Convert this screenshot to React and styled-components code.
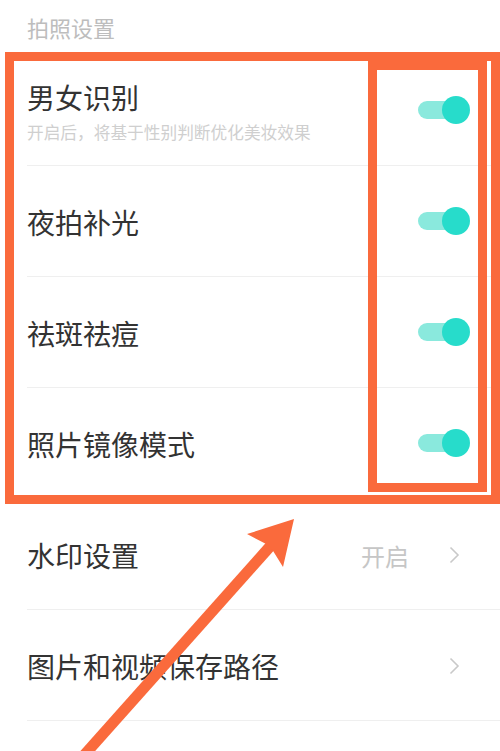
import React from 'react'
import styled, { createGlobalStyle } from 'styled-components'

const GlobalStyle = createGlobalStyle`
  html, body {
    margin: 0;
    padding: 0;
    background: #fff;
  }
  body {
    font-family: "Noto Sans CJK SC", "Noto Sans", sans-serif;
  }
`

const switches = [
  { title: '男女识别', desc: '开启后，将基于性别判断优化美妆效果' },
  { title: '夜拍补光' },
  { title: '祛斑祛痘' },
  { title: '照片镜像模式' },
]

const links = [
  { title: '水印设置', value: '开启' },
  { title: '图片和视频保存路径' },
  { title: '' },
]

const App = () => {
  return (
    <Page>
      <GlobalStyle />
      <SectionTitle>拍照设置</SectionTitle>
      <List>
        {switches.map((s) => (
          <Row key={s.title}>
            <Texts>
              <Title>{s.title}</Title>
              {s.desc && <Desc>{s.desc}</Desc>}
            </Texts>
            <Toggle>
              <Thumb />
            </Toggle>
          </Row>
        ))}
        {links.map((l, i) => (
          <Row key={i}>
            <Texts>
              <Title>{l.title}</Title>
            </Texts>
            {l.title && (
              <Trail>
                {l.value && <Value>{l.value}</Value>}
                <Chevron viewBox="0 0 11 18">
                  <polyline points="1.5,1.5 9,9 1.5,16.5" />
                </Chevron>
              </Trail>
            )}
          </Row>
        ))}
      </List>

      <Highlight $top={52} $left={5} $width={495} $height={452} />
      <Highlight $top={61} $left={368} $width={119} $height={431} />
      <Arrow viewBox="0 0 500 751">
        <line x1="78" y1="762" x2="274" y2="542" />
        <polygon points="294,519 247,534 270,546 283,567" />
      </Arrow>
    </Page>
  )
}

export default App

const Page = styled.div`
  position: relative;
  width: 500px;
  height: 751px;
  overflow: hidden;
  background: #fff;
`

const SectionTitle = styled.div`
  height: 55px;
  padding-left: 27px;
  display: flex;
  align-items: center;
  padding-bottom: 2px;
  box-sizing: border-box;
  font-size: 22px;
  color: #bdbdbd;
`

const List = styled.div`
  display: flex;
  flex-direction: column;
  padding-left: 27px;
`

const Row = styled.div`
  height: 111px;
  box-sizing: border-box;
  display: flex;
  align-items: center;
  justify-content: space-between;
  padding-right: 30px;
  padding-top: 2px;
  border-bottom: 1px solid #efefef;
`

const Texts = styled.div`
  display: flex;
  flex-direction: column;
  gap: 6px;
`

const Title = styled.div`
  font-size: 28px;
  line-height: 36px;
  color: #333;
`

const Desc = styled.div`
  font-size: 16.7px;
  line-height: 22px;
  color: #cfcfcf;
`

const Toggle = styled.div`
  position: relative;
  width: 52px;
  height: 28px;
  margin-top: -2px;
  display: flex;
  align-items: center;
  justify-content: flex-end;

  &::before {
    content: '';
    position: absolute;
    left: 0;
    right: 8px;
    top: 5px;
    height: 18px;
    border-radius: 9px;
    background: #8ae9dd;
  }
`

const Thumb = styled.div`
  position: relative;
  width: 28px;
  height: 28px;
  border-radius: 50%;
  background: #27dccb;
`

const Trail = styled.div`
  display: flex;
  align-items: center;
  gap: 40px;
  padding-right: 10px;
`

const Value = styled.span`
  font-size: 24px;
  color: #c6c6c6;
`

const Chevron = styled.svg`
  width: 11px;
  height: 18px;
  fill: none;
  stroke: #c9c9c9;
  stroke-width: 1.6;
`

const Highlight = styled.div`
  position: absolute;
  top: ${(p) => p.$top}px;
  left: ${(p) => p.$left}px;
  width: ${(p) => p.$width}px;
  height: ${(p) => p.$height}px;
  box-sizing: border-box;
  border: 9px solid #fa6a3c;
  pointer-events: none;
`

const Arrow = styled.svg`
  position: absolute;
  inset: 0;
  width: 500px;
  height: 751px;
  pointer-events: none;

  line {
    stroke: #fa6a3c;
    stroke-width: 11;
  }
  polygon {
    fill: #fa6a3c;
  }
`
